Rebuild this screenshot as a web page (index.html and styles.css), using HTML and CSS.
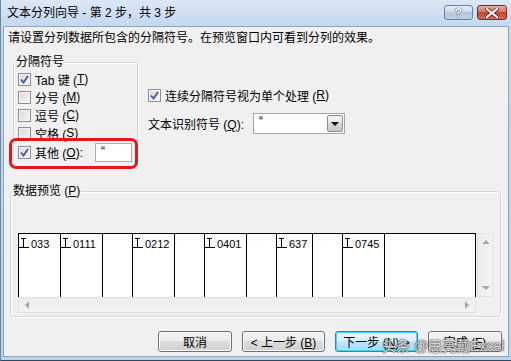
FILE: index.html
```html
<!DOCTYPE html>
<html lang="zh-CN">
<head>
  <meta charset="UTF-8" />
  <title>文本分列向导</title>
  <link rel="stylesheet" href="styles.css">
</head>
<body>
  <div class="window">
    <div class="titlebar">
      <span class="title">文本分列向导 - 第 2 步，共 3 步</span>
      <div class="caption-buttons">
        <span class="cap-btn help">?</span>
        <span class="cap-btn close">
          <svg width="14" height="10" viewBox="0 0 14 10"><path d="M2 1 L12 9 M12 1 L2 9" stroke="#5a1a1a" stroke-width="3.6" stroke-linecap="square"/><path d="M2 1 L12 9 M12 1 L2 9" stroke="#fff" stroke-width="2.2" stroke-linecap="square"/></svg>
        </span>
      </div>
    </div>

    <div class="client">
      <p class="hint">请设置分列数据所包含的分隔符号。在预览窗口内可看到分列的效果。</p>

      <div class="top-row">
        <div class="group delims">
          <span class="legend">分隔符号</span>
          <label class="row"><span class="check on"></span>Tab 键 (<u>T</u>)</label>
          <label class="row"><span class="check"></span>分号 (<u>M</u>)</label>
          <label class="row"><span class="check"></span>逗号 (<u>C</u>)</label>
          <label class="row"><span class="check"></span>空格 (<u>S</u>)</label>
          <label class="row other"><span class="check on"></span>其他 (<u>O</u>):<span class="textbox">“</span></label>
          <!-- annotation drawn over the "other" row -->
          <div class="highlight"></div>
        </div>

        <div class="options">
          <label class="row"><span class="check on"></span>连续分隔符号视为单个处理 (<u>R</u>)</label>
          <div class="row qualifier">
            <span class="q-label">文本识别符号 (<u>Q</u>):</span>
            <span class="combo">
              <span class="combo-value">“</span>
              <span class="combo-btn"><span class="tri-down"></span></span>
            </span>
          </div>
        </div>
      </div>

      <div class="group preview">
        <span class="legend">数据预览 (<u>P</u>)</span>
        <div class="preview-box">
          <div class="cells">
            <div class="cell w42"><span class="mark"></span>033</div>
            <div class="cell w42"><span class="mark"></span>0111</div>
            <div class="cell w30"></div>
            <div class="cell w42"><span class="mark"></span>0212</div>
            <div class="cell w30"></div>
            <div class="cell w42"><span class="mark"></span>0401</div>
            <div class="cell w30"></div>
            <div class="cell w36"><span class="mark"></span>637</div>
            <div class="cell w30"></div>
            <div class="cell w42"><span class="mark"></span>0745</div>
            <div class="cell last"></div>
          </div>
          <div class="vscroll">
            <span class="arrow up"></span>
            <span class="arrow down"></span>
          </div>
          <div class="hscroll">
            <span class="arrow left"></span>
            <span class="arrow right"></span>
          </div>
          <div class="corner"></div>
        </div>
      </div>

      <div class="buttons">
        <button class="btn small">取消</button>
        <button class="btn">&lt; 上一步 (<u>B</u>)</button>
        <button class="btn default">下一步 (<u>N</u>) &gt;</button>
        <button class="btn small">完成 (<u>F</u>)</button>
      </div>

      <span class="watermark">头条 @思亮戴Excel</span>
    </div>
  </div>
</body>
</html>
```

FILE: styles.css
```css
body {
  margin: 0;
  font-family: "Liberation Sans", "Noto Sans CJK SC", sans-serif;
  font-size: 12px;
  color: #000;
}

u {
  text-decoration: underline;
  text-underline-offset: 1px;
}

.window {
  width: 511px;
  height: 361px;
  box-sizing: border-box;
  display: flex;
  flex-direction: column;
  background: linear-gradient(#dae7f5, #c4d8ef 26px, #bad2ec);
  border-left: 1px solid #6f86a3;
  border-bottom: 1px solid #34495f;
}

.titlebar {
  height: 26px;
  display: flex;
  align-items: flex-start;
  padding: 0 4px 0 6px;
}

.title {
  flex: 1;
  line-height: 26px;
  font-size: 12px;
}

.caption-buttons {
  display: flex;
  gap: 4px;
  margin-top: 5px;
}

.cap-btn {
  height: 15px;
  box-sizing: border-box;
  border: 1px solid #6d7f98;
  border-radius: 3px;
  display: flex;
  align-items: center;
  justify-content: center;
}

.help {
  width: 29px;
  background: linear-gradient(#e4edf7, #c9d8ea 50%, #b3c7de 50%, #bfd1e6);
  font-weight: bold;
  font-size: 12px;
  color: #fff;
  text-shadow: 0 0 1px #2d3f58, 0 0 1px #2d3f58;
}

.close {
  width: 30px;
  border-color: #7a2c2c;
  background: linear-gradient(#e9a99b, #d2715f 50%, #c0462f 50%, #d26d55);
}

.client {
  flex: 1;
  margin: 0 2px 3px 2px;
  background: #f0f0f0;
  border: 1px solid #8fa4bd;
  position: relative;
}

.hint {
  margin: 0;
  padding: 4px 0 0 4px;
  line-height: 14px;
}

.top-row {
  display: flex;
  margin-top: 17px;
}

.group {
  position: relative;
  box-sizing: border-box;
  border: 1px solid #d1d9df;
  border-radius: 3px;
  box-shadow: inset 1px 1px 0 #fff, 1px 1px 0 #fff;
}

.legend {
  position: absolute;
  top: -8px;
  left: 1px;
  padding: 0 1px;
  background: #f0f0f0;
  line-height: 14px;
}

.delims {
  margin-left: 9px;
  width: 125px;
  height: 105px;
  padding: 7px 5px 0 4px;
}

.row {
  display: flex;
  align-items: center;
  height: 18px;
  white-space: nowrap;
}

.check {
  width: 13px;
  height: 13px;
  box-sizing: border-box;
  border: 1px solid #8f8f8f;
  margin-right: 4px;
  background: linear-gradient(135deg, #d9d9d9, #f6f6f6);
  box-shadow: inset 0 0 0 1px #f4f4f4;
  flex: none;
}

.check.on {
  background:
    url("data:image/svg+xml,%3Csvg xmlns='http://www.w3.org/2000/svg' width='11' height='11'%3E%3Cpath d='M2 5.5 L4.5 8.5 L9 2' fill='none' stroke='%233d5a98' stroke-width='1.8'/%3E%3C/svg%3E") center no-repeat,
    linear-gradient(135deg, #d9d9d9, #f6f6f6);
}

.other {
  height: 19px;
  margin-top: 1px;
}

.textbox {
  margin-left: auto;
  width: 37px;
  height: 19px;
  box-sizing: border-box;
  background: #fff;
  border: 1px solid #abadb3;
  padding: 0 0 0 5px;
  line-height: 14px;
}

.highlight {
  position: absolute;
  left: -5px;
  top: 75px;
  width: 129px;
  height: 31px;
  box-sizing: border-box;
  border: 3px solid #e8161c;
  border-radius: 7px;
}

.options {
  margin-left: 10px;
  padding-top: 24px;
}

.qualifier {
  margin-top: 9px;
  height: 21px;
}

.q-label {
  width: 105px;
}

.combo {
  display: flex;
  width: 92px;
  height: 21px;
  box-sizing: border-box;
  border: 1px solid #a2a6ad;
  background: #fff;
}

.combo-value {
  flex: 1;
  padding-left: 5px;
  line-height: 15px;
}

.combo-btn {
  width: 16px;
  margin: 1px;
  box-sizing: border-box;
  border: 1px solid #8d8d8d;
  border-radius: 2px;
  background: linear-gradient(#f4f4f4, #e6e6e6 50%, #d6d6d6 50%, #cbcbcb);
  display: flex;
  align-items: center;
  justify-content: center;
}

.tri-down {
  border-left: 4px solid transparent;
  border-right: 4px solid transparent;
  border-top: 4px solid #000;
}

.preview {
  margin: 24px 0 0 6px;
  width: 491px;
  height: 126px;
  padding: 41px 0 0 7px;
}

.preview-box {
  display: grid;
  grid-template-columns: 458px 17px;
  grid-template-rows: 64px 16px;
}

.cells {
  display: flex;
  background: #fff;
  border-top: 1px solid #000;
  border-left: 1px solid #000;
  font-size: 11px;
}

.cell {
  box-sizing: border-box;
  border-right: 1px solid #000;
  padding-top: 4px;
  line-height: 12px;
  display: flex;
  align-items: flex-start;
  height: 63px;
  white-space: nowrap;
}

.w42 { width: 42px; }
.w36 { width: 36px; }
.w30 { width: 30px; }
.last { width: 91px; }

.mark {
  width: 10px;
  height: 10px;
  margin-right: 2px;
  box-sizing: border-box;
  border-bottom: 1px solid #000;
  background:
    linear-gradient(#000, #000) 4px 0 / 1px 100% no-repeat,
    linear-gradient(#000, #000) 2px 0 / 5px 1px no-repeat;
}

.vscroll,
.hscroll {
  position: relative;
  border: 1px solid #e2e2e2;
}

.vscroll {
  margin-left: 1px;
  background: linear-gradient(90deg, #ececec, #f4f4f4);
}

.hscroll {
  background: linear-gradient(#ececec, #f4f4f4);
}

.corner {
  background: #f0f0f0;
}

.arrow {
  position: absolute;
  width: 0;
  height: 0;
}

.arrow.up {
  left: 4px;
  top: 6px;
  border-left: 4px solid transparent;
  border-right: 4px solid transparent;
  border-bottom: 4px solid #a8a8a8;
}

.arrow.down {
  left: 4px;
  bottom: 6px;
  border-left: 4px solid transparent;
  border-right: 4px solid transparent;
  border-top: 4px solid #a8a8a8;
}

.arrow.left {
  left: 6px;
  top: 3px;
  border-top: 4px solid transparent;
  border-bottom: 4px solid transparent;
  border-right: 4px solid #a8a8a8;
}

.arrow.right {
  right: 6px;
  top: 3px;
  border-top: 4px solid transparent;
  border-bottom: 4px solid transparent;
  border-left: 4px solid #a8a8a8;
}

.buttons {
  display: flex;
  justify-content: flex-end;
  gap: 10px;
  margin-top: 14px;
  padding-right: 6px;
}

.btn {
  width: 83px;
  height: 21px;
  padding: 0;
  font-family: inherit;
  font-size: 12px;
  border: 1px solid #707070;
  border-radius: 3px;
  background: linear-gradient(#f2f2f2, #ebebeb 50%, #dddddd 50%, #cfcfcf);
  box-shadow: inset 0 0 0 1px #fcfcfc;
  color: #000;
}

.btn.small {
  width: 74px;
}

.btn.default {
  border-color: #3c7fb1;
  box-shadow: inset 0 0 0 1px #48d8fb;
  background: linear-gradient(#eaf6fd, #d9f0fc 50%, #bee6fd 50%, #a7d9f5);
}

.watermark {
  position: absolute;
  left: 378px;
  top: 308px;
  font-size: 14px;
  color: rgba(255, 255, 255, 0.75);
  text-shadow: 0 0 1px #555, 0 0 1px #555, 0 0 2px #777;
  white-space: nowrap;
}
```
